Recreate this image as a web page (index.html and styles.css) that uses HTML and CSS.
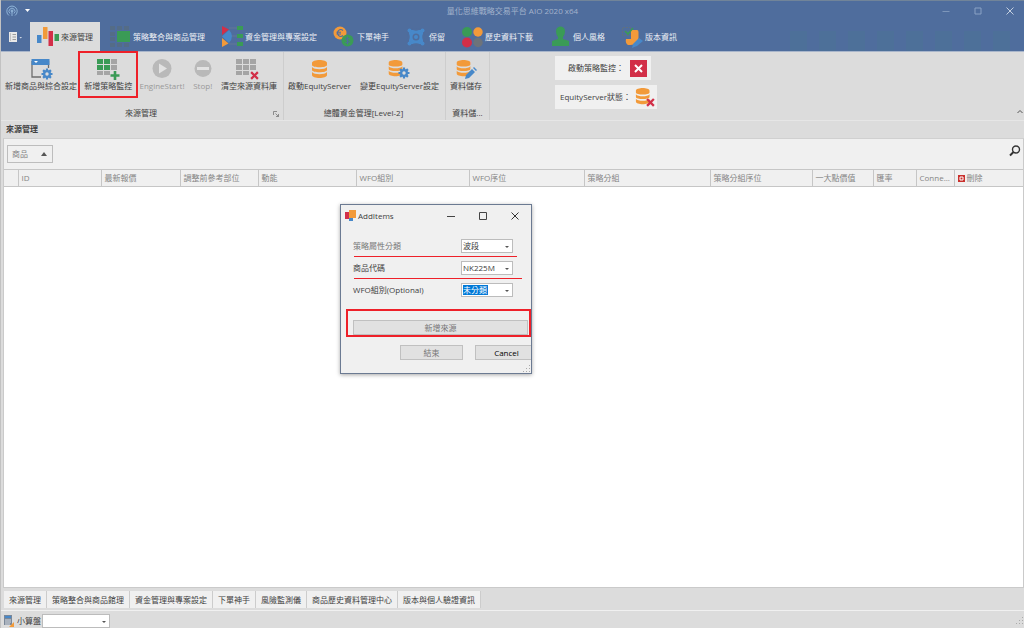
FILE: index.html
```html
<!DOCTYPE html>
<html lang="zh-Hant">
<head>
<meta charset="utf-8">
<title>量化思維戰略交易平台 AIO 2020 x64</title>
<link rel="stylesheet" href="styles.css">
</head>
<body>
<svg class="defs" aria-hidden="true">
  <symbol id="db" viewBox="0 0 22 22">
    <path fill="#f29a3a" d="M3 4c0-4 15-4 15 0v2c0 3-15 3-15 0zM3 8c2 3 13 3 15 0v3c0 3-15 3-15 0zM3 13c2 3 13 3 15 0v3c0 4-15 4-15 0z"/>
  </symbol>
  <symbol id="gear" viewBox="0 0 12 12">
    <g stroke="#4788c9" stroke-width="2.2"><path d="M6 .5v11M.5 6h11M2.1 2.1l7.8 7.8M9.900 2.1L2.1 9.900"/></g>
    <circle cx="6" cy="6" r="4" fill="#4788c9"/><circle cx="6" cy="6" r="1.700" fill="#dcdcdc"/>
  </symbol>
  <symbol id="cross" viewBox="0 0 8 8">
    <path d="M1 1l6 6M7 1L1 7" stroke="#d22f48" stroke-width="2"/>
  </symbol>
  <symbol id="pencil" viewBox="0 0 12 12">
    <path fill="#4788c9" d="M1 8l6-6 3 3-6 6-4 1zM8 1l1-1 3 3-1 1z"/>
  </symbol>
</svg>
<div class="app">
  <header class="titlebar">
    <div class="quick">
      <svg width="12" height="12" viewBox="0 0 12 12" fill="none" stroke="#8fb4d8"><path d="M3 10.500a5.200 5.200 0 1 1 6 0M4 8.500a3 3 0 1 1 4 0"/><circle cx="6" cy="6" r="1" fill="#8fb4d8"/><path d="M6 7v4"/></svg>
      <svg width="5" height="3" viewBox="0 0 5 3"><path d="M0 0h5L2.500 3z" fill="#fff"/></svg>
    </div>
    <h1 class="title">量化思維戰略交易平台 AIO 2020 x64</h1>
    <div class="winbuttons">
      <button aria-label="最小化"><svg width="8" height="8" viewBox="0 0 8 8"><path d="M0.500 4.500h7" stroke="#7d96ba"/></svg></button>
      <button aria-label="最大化"><svg width="8" height="8" viewBox="0 0 8 8"><path d="M1 1h6v6H1z" fill="none" stroke="#8aa2c4"/></svg></button>
      <button aria-label="關閉"><svg width="8" height="8" viewBox="0 0 8 8"><path d="M.5.5l7 7M7.500.5l-7 7" stroke="#c3cfe0"/></svg></button>
    </div>
  </header>

  <nav class="tabs">
    <button class="filemenu" aria-label="檔案"><svg width="13" height="10" viewBox="0 0 13 10"><path d="M0 0h8v10H0z" fill="#e8e8e8"/><path d="M1 2h1M1 4h1M1 6h1M1 8h1M3.500 2.500h3.500M3.500 5h3.500M3.500 7.500h3.500" stroke="#888" stroke-width=".8"/><path d="M10.500 5h2.500l-1.300 1.500z" fill="#d5dce8"/></svg></button>
    <button class="tab active"><svg class="ico" viewBox="0 0 22 22"><path fill="#4788c9" d="M0 9h4.500v8H0z"/><path fill="#f29a3a" d="M6 1h4.500v12H6z"/><path fill="#d22f48" d="M11.500 5H16v15h-4.500z"/><path fill="#3a9b56" d="M17.500 8H22v7h-4.500z"/></svg>來源管理</button>
    <button class="tab"><svg class="ico" viewBox="0 0 22 22"><g fill="#546c87"><path d="M1 0h5v4H1zM8 0h5v4H8zM15 0h5v4h-5zM1 6h5v4H1zM1 11h5v4H1zM1 17h5v4H1zM8 17h5v4H8zM15 17h5v4h-5z"/></g><path fill="#3a9b56" d="M8 5h13v11H8z"/></svg>策略整合與商品管理</button>
    <button class="tab"><svg class="ico" viewBox="0 0 22 22"><path d="M8 2h8M10 10h6M8 18h8" stroke="#657896"/><path fill="#4788c9" d="M8 4q6 6 0 13L1 10.500z"/><path fill="#d22f48" d="M1 0l7 3.500L1 9z"/><path fill="#f29a3a" d="M1 12l6.500 5.500L1 21z"/><path fill="#3a9b56" d="M16 0h6v4h-6zM16 8h6v4h-6zM16 16h6v4h-6z"/></svg>資金管理與專案設定</button>
    <button class="tab"><svg class="ico" viewBox="0 0 22 22"><circle cx="7" cy="7" r="6.500" fill="#f29a3a"/><path d="M10 4.500a3.300 3.300 0 1 0 0 5M3.500 6.200h4.500M3.500 8h4.500" fill="none" stroke="#4f6d9d" stroke-width="1.100"/><circle cx="14.500" cy="14.500" r="6" fill="#3a9b56"/><path d="M16.500 12.500q-4-1.500-4 .5c0 1.500 4 1.200 4 3q-.5 1.500-4 .5M14.500 10.500v8" fill="none" stroke="#4f6d9d"/></svg>下單神手</button>
    <button class="tab"><svg class="ico" viewBox="0 0 22 22"><path d="M4 4h14v14H4z" fill="#4788c9"/><path d="M7 2.500q4 2.500 8 0M7 19.500q4-2.500 8 0M2.500 7q2.500 4 0 8M19.500 7q-2.500 4 0 8" fill="none" stroke="#4f6d9d" stroke-width="2"/><circle cx="11" cy="11" r="3.500" fill="#4f6d9d"/><circle cx="11" cy="11" r="2" fill="#4788c9"/><g fill="#4788c9"><circle cx="4.500" cy="4.500" r="2"/><circle cx="17.500" cy="4.500" r="2"/><circle cx="4.500" cy="17.500" r="2"/><circle cx="17.500" cy="17.500" r="2"/></g></svg>保留</button>
    <button class="tab"><svg class="ico" viewBox="0 0 22 22"><circle cx="6" cy="6" r="5" fill="#3a9b56"/><circle cx="17" cy="6" r="4.700" fill="#f29a3a"/><circle cx="6" cy="16.500" r="5" fill="#d22f48"/><circle cx="17" cy="16.500" r="4.700" fill="#6d737a"/></svg>歷史資料下載</button>
    <button class="tab"><svg class="ico" viewBox="0 0 22 22"><path d="M7 5c0-6 9-6 9 0 0 3-1 5-2 6v2l6 2v5H3v-5l6-2v-2c-1-1-2-3-2-6z" fill="#3a9b56"/></svg>個人風格</button>
    <button class="tab"><svg class="ico" viewBox="0 0 22 22"><path d="M10 1.500H1.500v8H10z" fill="none" stroke="#5f7181" stroke-dasharray="2 1"/><path d="M10 4h6q1.500 0 1.500 2v6q-1 7-8 7H7q-3-2-2-6h5z" fill="#f29a3a"/><path d="M4 5l3 3 5-6" fill="none" stroke="#3a9b56" stroke-width="1.700"/><path d="M12 18l6-6 4 3-6 5-5 2z" fill="#4788c9"/></svg>版本資訊</button>
    <div class="pattern"></div>
  </nav>

  <section class="ribbon">
    <div class="group wide">
      <div class="tools">
        <button class="tool"><svg class="ico" viewBox="0 0 22 22"><path d="M2 3v16h9M18.500 3v7" fill="none" stroke="#6d6d6d" stroke-width="1.300"/><path d="M1.500 1h18v6h-18z" fill="#4788c9"/><path d="M4 3h4l-2 2z" fill="#fff"/><use href="#gear" x="11" y="10" width="12" height="12"/></svg>新增商品與綜合設定</button>
        <button class="tool marked"><svg class="ico" viewBox="0 0 22 22"><path fill="#3a9b56" d="M0 1h6v5H0zM7 1h6v5H7zM0 7h6v5H0zM7 7h6v5H7z"/><path fill="#a5a5a5" d="M14 1h6v5h-6zM14 7h6v5h-6zM0 13h6v4H0zM7 13h6v4H7z"/><path d="M18 13v9M13.500 17.500h9" stroke="#3a9b56" stroke-width="2.600"/></svg>新增策略監控</button>
        <button class="tool" disabled><svg class="ico" viewBox="0 0 22 22"><circle cx="11" cy="10.500" r="9.500" fill="#b9b9b9"/><path d="M8 5.500l8 5-8 5z" fill="#e2e2e2"/></svg>EngineStart!</button>
        <button class="tool" disabled><svg class="ico" viewBox="0 0 22 22"><circle cx="11" cy="10.500" r="8.500" fill="#b9b9b9"/><path d="M5 9h12v3H5z" fill="#e2e2e2"/></svg>Stop!</button>
        <button class="tool"><svg class="ico" viewBox="0 0 22 22"><path fill="#a5a5a5" d="M-2 1h6v5h-6zM5 1h6v5H5zM12 1h6v5h-6zM-2 7h6v5h-6zM5 7h6v5H5zM12 7h6v5h-6zM-2 13h6v4h-6zM5 13h6v4H5z"/><use href="#cross" x="12" y="13" width="9" height="9"/></svg>清空來源資料庫</button>
      </div>
      <div class="caption">來源管理<svg class="launch" width="6" height="6" viewBox="0 0 6 6"><path d="M.5 4V.5H4M2.500 2.500l3 3M5.500 3v2.500H3" fill="none" stroke="#777" stroke-width=".8"/></svg></div>
    </div>
    <div class="group equity">
      <div class="tools">
        <button class="tool"><svg class="ico" viewBox="0 0 22 22"><use href="#db" y="1" width="22" height="22"/></svg>啟動EquityServer</button>
        <button class="tool"><svg class="ico" viewBox="0 0 22 22"><use href="#db" x="-2" y="0" width="20" height="22"/><use href="#gear" x="10" y="9" width="12" height="12"/></svg>變更EquityServer設定</button>
      </div>
      <div class="caption">總體資金管理[Level-2]</div>
    </div>
    <div class="group save">
      <div class="tools">
        <button class="tool"><svg class="ico" viewBox="0 0 22 22"><use href="#db" x="-1" y="0" width="20" height="22"/><use href="#pencil" x="10" y="9" width="12" height="12"/></svg>資料儲存</button>
      </div>
      <div class="caption">資料儲...</div>
    </div>
    <div class="states">
      <div class="state first">啟動策略監控：<svg width="17" height="17" viewBox="0 0 17 17"><path d="M0 0h17v17H0z" fill="#d22f48"/><path d="M5 5l7 7M12 5l-7 7" stroke="#fff" stroke-width="2"/></svg></div>
      <div class="state">EquityServer狀態：<svg width="20" height="20" viewBox="0 0 22 22"><use href="#db" x="-2" width="22" height="22"/><use href="#cross" x="12" y="12" width="10" height="10"/></svg></div>
    </div>
    <button class="collapse" aria-label="摺疊"><svg width="6" height="5" viewBox="0 0 6 5"><path d="M.5 4L3 1.500 5.500 4" fill="none" stroke="#555"/></svg></button>
  </section>

  <main class="panel">
    <h2 class="panel-title">來源管理</h2>
    <div class="grid">
      <div class="filter">
        <button class="chip">商品<svg width="6" height="4" viewBox="0 0 6 4"><path d="M0 4l3-4 3 4z" fill="#555"/></svg></button>
        <button class="search" aria-label="搜尋"><svg width="12" height="12" viewBox="0 0 12 12" fill="none" stroke="#333"><circle cx="7" cy="4.500" r="3.500" stroke-width="1.400"/><path d="M4.500 7L1 10.500" stroke-width="2"/></svg></button>
      </div>
      <table class="data">
        <colgroup><col class="w14"><col class="w83"><col class="w79"><col class="w78"><col class="w98"><col class="w113"><col class="w115"><col class="w126"><col class="w102"><col class="w61"><col class="w43"><col class="w38"><col></colgroup>
        <thead><tr><th></th><th>ID</th><th>最新報價</th><th>調整前參考部位</th><th>動能</th><th>WFO組別</th><th>WFO序位</th><th>策略分組</th><th>策略分組序位</th><th>一大點價值</th><th>匯率</th><th>Conne...</th><th><svg class="del" width="7" height="7" viewBox="0 0 7 7"><path d="M0 0h7v7H0z" fill="#c9302c"/><path d="M2 2h3v3H2z" fill="none" stroke="#fff"/></svg>刪除</th></tr></thead>
      </table>
    </div>
  </main>

  <nav class="pages">
    <button class="page">來源管理</button><button class="page">策略整合與商品館理</button><button class="page">資金管理與專案設定</button><button class="page">下單神手</button><button class="page">風險監測儀</button><button class="page">商品歷史資料管理中心</button><button class="page">版本與個人驗證資訊</button>
  </nav>

  <footer class="statusbar">
    <svg width="11" height="12" viewBox="0 0 11 12"><path d="M0 0h8v10H0z" fill="#7a8798"/><path d="M1 1h6v2H1z" fill="#4788c9"/><path d="M1 5h6M1 7h6M1 9h5" stroke="#d9dde3"/><path d="M5 12l5-5v5z" fill="#f29a3a"/></svg>
    <label for="calc">小算盤</label>
    <span class="combo calc"><select id="calc"><option></option></select></span>
    <svg class="grip" width="8" height="8" viewBox="0 0 8 8"><path d="M6 0h1v1H6zM3 3h1v1H3zM6 3h1v1H6zM0 6h1v1H0zM3 6h1v1H3zM6 6h1v1H6z" fill="#aaa"/></svg>
  </footer>
</div>

<section class="dialog" role="dialog" aria-label="AddItems">
  <header class="dialog-head">
    <svg width="12" height="12" viewBox="0 0 12 12"><path d="M0 2h4v7H0z" fill="#d22f48"/><path d="M4 0h7v8H4z" fill="#f29a3a"/><path d="M4 8h4v3H4z" fill="#4788c9"/></svg>
    <span class="dialog-name">AddItems</span>
    <button aria-label="最小化"><svg width="8" height="8" viewBox="0 0 8 8"><path d="M0 4.500h8" stroke="#444"/></svg></button>
    <button aria-label="最大化"><svg width="8" height="8" viewBox="0 0 8 8"><path d="M.5.5h7v7h-7z" fill="none" stroke="#444"/></svg></button>
    <button aria-label="關閉"><svg width="8" height="8" viewBox="0 0 8 8"><path d="M.5.5l7 7M7.500.5l-7 7" stroke="#333"/></svg></button>
  </header>
  <div class="fields">
    <div class="field"><label class="soft" for="kind">策略屬性分類</label><span class="combo"><select id="kind"><option>波段</option></select></span></div>
    <div class="field"><label for="code">商品代碼</label><span class="combo"><select id="code"><option>NK225M</option></select></span></div>
    <div class="field"><label for="wfo">WFO組別(Optional)</label><span class="combo"><select id="wfo" class="selected"><option>未分類</option></select></span></div>
  </div>
  <div class="addbox"><button class="push add soft">新增來源</button></div>
  <div class="actions"><button class="push soft">結束</button><button class="push cancel">Cancel</button></div>
  <span class="mark one"></span><span class="mark two"></span>
  <svg class="grip" width="8" height="8" viewBox="0 0 8 8"><path d="M6 0h1v1H6zM3 3h1v1H3zM6 3h1v1H6zM0 6h1v1H0zM3 6h1v1H3zM6 6h1v1H6z" fill="#aaa"/></svg>
</section>
</body>
</html>
```

FILE: styles.css
```css
* { box-sizing: border-box; }
body {
  margin: 0;
  font: 8px/12px "Open Sans", "Noto Sans CJK TC", sans-serif;
  color: #404040;
  background: #dcdcdc;
}
button, select {
  font: inherit;
  color: inherit;
  margin: 0;
  padding: 0;
  border: 0;
  background: none;
  border-radius: 0;
  white-space: nowrap;
}
svg { display: block; flex: none; overflow: visible; }
.defs { position: absolute; width: 0; height: 0; }
.app {
  display: flex;
  flex-direction: column;
  min-height: 100vh;
  border-left: 1px solid #c2c2c2;
}
.ico { width: 22px; height: 22px; }

.titlebar {
  display: grid;
  grid-template-columns: 1fr auto 1fr;
  align-items: center;
  height: 22px;
  padding-bottom: 2px;
  border-top: 1px solid #718499;
  background: #4f6d9d;
}
.quick { display: flex; align-items: center; gap: 7px; padding-left: 5px; }
.title { margin: 0; font-size: 8px; font-weight: 400; color: #a3b3cc; }
.winbuttons { display: flex; justify-content: flex-end; gap: 24px; padding-right: 10px; }

.tabs {
  display: flex;
  gap: 2px;
  height: 30px;
  background: #4f6d9d;
  border-bottom: 1px solid #a9b6cb;
}
.filemenu { width: 27px; padding-left: 8px; }
.tab {
  display: flex;
  align-items: center;
  gap: 2px;
  padding: 0 7px;
  color: #eef1f6;
}
.tab.active { background: #dcdcdc; color: #404040; height: 30px; }
.pattern {
  flex: 1;
  margin: 9px 12px 0 104px;
  background: repeating-linear-gradient(90deg, #4d7099 0 17px, transparent 17px 29px);
}

.ribbon {
  display: flex;
  height: 69px;
  background: #dcdcdc;
  border-bottom: 1px solid #e6e6e6;
}
.group {
  display: flex;
  flex-direction: column;
  justify-content: space-between;
  padding: 6px 2px 1px;
  border-right: 1px solid #cdcdcd;
}
.wide { width: 283px; padding-right: 4px; }
.equity { width: 162px; padding-right: 4px; }
.save { width: 44px; }
.tools { display: flex; justify-content: space-between; }
.tool {
  position: relative;
  display: flex;
  flex-direction: column;
  align-items: center;
  padding: 0 2px;
}
.tool:disabled { color: #999; }
.marked::after {
  content: "";
  position: absolute;
  inset: -7px -4px -6px;
  border: 2px solid #ee2029;
}
.caption { position: relative; text-align: center; }
.launch { position: absolute; right: 0; bottom: 2px; }
.states {
  display: flex;
  flex-direction: column;
  align-items: flex-start;
  gap: 5px;
  padding: 4px 0 0 65px;
}
.state {
  display: flex;
  align-items: center;
  gap: 4px;
  height: 24px;
  padding: 0 2px 0 5px;
  background: #f0f0f0;
}
.state.first { padding: 0 4px 0 13px; gap: 6px; }
.collapse { margin-left: auto; align-self: flex-end; padding: 0 1px 6px; }

.panel { flex: 1; display: flex; flex-direction: column; padding: 0 0 0 2px; }
.panel-title { margin: 0; padding: 2px 3px 3px; font-size: 8px; line-height: 12px; font-weight: 700; }
.grid {
  flex: 1;
  background: #fff;
  border: 1px solid #cacaca;
  border-top-color: #d0d0d0;
}
.filter {
  display: flex;
  align-items: center;
  justify-content: space-between;
  height: 30px;
  padding: 0 2px 0 3px;
  background: #f0f0f0;
}
.chip {
  display: flex;
  align-items: center;
  gap: 13px;
  height: 18px;
  padding: 0 5px 0 4px;
  border: 1px solid #bdbdbd;
  color: #808080;
}
.search { padding-bottom: 7px; }
.data { width: 100%; table-layout: fixed; border-collapse: collapse; background: #f0f0f0; }
.data th {
  height: 17px;
  padding: 0 0 0 3px;
  border: 1px solid #c6c6c6;
  border-left: 0;
  text-align: left;
  font-weight: 400;
  color: #858585;
  white-space: nowrap;
  overflow: hidden;
}
.data th:last-child { border-right: 0; }
.del { display: inline-block; margin-right: 2px; vertical-align: -1px; }
.w14 { width: 14px; }
.w83 { width: 83px; }
.w79 { width: 79px; }
.w78 { width: 78px; }
.w98 { width: 98px; }
.w113 { width: 113px; }
.w115 { width: 115px; }
.w126 { width: 126px; }
.w102 { width: 102px; }
.w61 { width: 61px; }
.w43 { width: 43px; }
.w38 { width: 38px; }

.pages { display: flex; padding: 3px 0 2px 3px; border-bottom: 1px solid #f0f0f0; }
.page {
  height: 17px;
  padding: 0 5px;
  background: #f0f0f0;
  border-right: 1px solid #cccccc;
}

.statusbar { display: flex; align-items: center; height: 17px; padding: 2px 0 0 3px; }
.statusbar label { padding: 0 1px 0 2px; }
.combo { position: relative; display: block; background: #fff; border: 1px solid #bcbcbc; }
.combo::after {
  content: "";
  position: absolute;
  right: 3px;
  top: 50%;
  border: 2px solid transparent;
  border-top-color: #555;
}
.combo select {
  display: block;
  appearance: none;
  width: 100%;
  height: 12px;
  line-height: 12px;
  padding: 0 10px 0 1px;
  outline: 0;
}
.calc { width: 68px; }
.statusbar .grip { margin-left: auto; }

.dialog {
  position: absolute;
  left: 340px;
  top: 204px;
  width: 192px;
  height: 170px;
  background: #f0f0f0;
  border: 1px solid #6b7a92;
  box-shadow: 0 1px 4px rgba(0, 0, 0, 0.35);
  overflow: hidden;
}
.dialog-head {
  display: flex;
  align-items: center;
  gap: 24px;
  height: 21px;
  padding: 0 12px 0 4px;
}
.dialog-name { flex: 1; margin-left: -23px; }
.fields { display: flex; flex-direction: column; gap: 8px; padding: 13px 18px 0 12px; }
.field { display: flex; align-items: center; justify-content: space-between; height: 14px; }
.field .combo { width: 52px; }
.soft { color: #777; }
.combo .selected { color: #fff; background: linear-gradient(#0078d7, #0078d7) 1px 1px / 25px 10px no-repeat; }
.selected option { color: #333; }
.addbox {
  display: flex;
  align-items: flex-end;
  height: 28px;
  margin: 12px 0 0 5px;
  padding: 0 1px 0 5px;
  border: 2px solid #ee2029;
}
.push { height: 15px; background: #e1e1e1; border: 1px solid #c0c0c0; width: 63px; flex: none; line-height: 13px; }
.push.add { flex: 1; }
.actions { display: flex; gap: 12px; margin: 8px 0 0 59px; }
.push.cancel { color: #000; }
.mark { position: absolute; left: 13px; height: 1px; background: #ee2029; }
.one { top: 51px; width: 163px; }
.two { top: 73px; width: 168px; }
.dialog .grip { position: absolute; right: 0; bottom: 0; }
```
